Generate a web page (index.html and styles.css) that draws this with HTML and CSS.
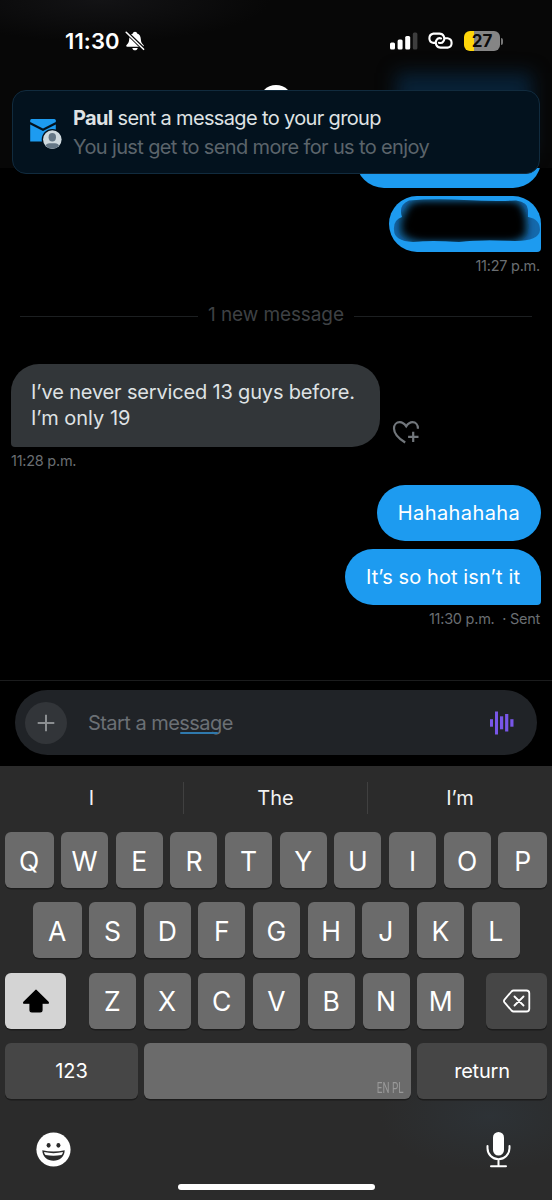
FILE: index.html
```html
<!DOCTYPE html>
<html lang="en">
<head>
<meta charset="utf-8">
<title>Messages</title>
<link rel="stylesheet" href="styles.css">
</head>
<body>
<div class="phone">
  <header class="header">
    <div class="glow"></div>
    <div class="status">
      <div class="clock">
        <span class="time">11:30</span>
        <svg class="bell" width="20" height="20" viewBox="0 0 20 20">
          <path d="M10 .8c-1.300 0-1.900.8-2.100 1.600C5.400 3.200 4.300 5.300 4.200 8c-.1 3-.9 4.300-2.600 5.900-.7.700-.4 1.800.7 1.800h15.400c1.100 0 1.400-1.100.7-1.800-1.700-1.600-2.500-2.900-2.600-5.900-.1-2.700-1.200-4.800-3.700-5.600C11.900 1.600 11.300.8 10 .8z" fill="#fff"/>
          <path d="M7.300 16.900h5.400c-.3 1.500-1.300 2.300-2.700 2.300s-2.400-.8-2.700-2.300z" fill="#fff"/>
          <path d="M1.200 1l17.600 17.200" stroke="#080808" stroke-width="3.600"/>
          <path d="M1.200 1.300l17.400 17" stroke="#fff" stroke-width="1.600" stroke-linecap="round"/>
        </svg>
      </div>
      <div class="indicators">
        <svg width="29" height="18" viewBox="0 0 29 18">
          <rect x="1" y="10.500" width="5" height="7" rx="1.500" fill="#fff"/>
          <rect x="8.600" y="7.500" width="5" height="10" rx="1.500" fill="#fff"/>
          <rect x="16.200" y="4" width="5" height="13.500" rx="1.500" fill="#fff"/>
          <rect x="23.800" y=".4" width="4.600" height="17.100" rx="1.500" fill="#3d3d3d"/>
        </svg>
        <svg class="link" width="27" height="18" viewBox="0 0 27 18" fill="none" stroke="#fff" stroke-width="2.100" stroke-linecap="round">
          <path d="M7.600 10.900H6.400A4.700 4.700 0 0 1 6.400 1.600H12.200A4.900 4.900 0 0 1 16.200 9.600C15.100 11.200 13.400 11.200 11.900 10.800"/>
          <path d="M18.400 6.300H20.600A4.700 4.700 0 0 1 20.600 15.600H13.800A4.900 4.900 0 0 1 9.800 7.700C10.900 6.100 12.600 5.900 14.100 6.400"/>
        </svg>
        <div class="battery"><span class="level">27</span></div>
        <span class="nub"></span>
      </div>
    </div>
    <div class="avatar"></div>
    <div class="toast">
      <svg class="mail" width="34" height="32" viewBox="0 0 34 32">
        <path d="M1.500 1h22.800q1.500 0 1.500 1.500V4L13 10.400.2 4V2.500Q.2 1 1.500 1z" fill="#1d9bf0"/>
        <path d="M.2 6.500L13 12.900l12.800-6.400V23.600H.2z" fill="#1d9bf0"/>
        <circle cx="22.300" cy="21.600" r="10.600" fill="#03121e"/>
        <circle cx="22.300" cy="21.600" r="9.300" fill="#cfd9de"/>
        <ellipse cx="22.300" cy="19.300" rx="3.700" ry="4.200" fill="#657786"/>
        <path d="M15.600 28q.6-2.800 4-2.800h5.400q3.400 0 4 2.800a9.300 9.300 0 0 1-13.400 0z" fill="#657786"/>
      </svg>
      <div class="toast-text">
        <div class="toast-title"><b>Paul</b> sent a message to your group</div>
        <div class="toast-body">You just get to send more for us to enjoy</div>
      </div>
    </div>
  </header>

  <main class="chat">
    <div class="bubble mine clipped"></div>
    <div class="bubble mine tail redacted">
      <svg width="152" height="56" viewBox="0 0 152 56">
        <defs>
          <filter id="soft" x="-20%" y="-40%" width="140%" height="180%"><feGaussianBlur stdDeviation="4.500"/></filter>
          <filter id="edge"><feGaussianBlur stdDeviation=".6"/></filter>
          <clipPath id="marker"><path d="M20 4.500Q45 2.500 75 4T127 4.500Q139 6 139 14L139 21Q151 23 151 34Q150 45 126 45Q92 43 70 46Q42 44 24 46Q5 45 5 34Q4 24 13 21Q9 9 20 4.500z"/></clipPath>
        </defs>
        <g filter="url(#edge)"><g clip-path="url(#marker)">
          <rect width="152" height="56" fill="#02101b" fill-opacity=".32"/>
          <path d="M22 7h108l7 16v17l-10 4H22L12 38V24z" fill="#000" filter="url(#soft)"/>
          <rect x="24" y="8" width="106" height="34" rx="9" fill="#000" filter="url(#soft)"/>
        </g></g>
      </svg>
    </div>
    <div class="stamp right">11:27 p.m.</div>
    <div class="divider"><i></i><span>1 new message</span><i></i></div>
    <div class="incoming">
      <div class="bubble theirs"><span class="line1">I’ve never serviced 13 guys before.</span><br><span class="line2">I’m only 19</span></div>
      <svg class="heart" width="28" height="26" viewBox="0 0 28 26" fill="none" stroke="#71767b" stroke-width="2.200">
        <path d="M13.200 22.500C6.500 18.300 2 13.500 2 8.400C2 4.700 4.500 2.200 7.700 2.200C10.500 2.200 12.500 3.900 14.200 6.300C15.800 3.900 17.800 2.200 20.500 2.200C23.700 2.200 25.900 4.600 25.900 8.300V8.700"/>
        <path d="M21.200 11.800v10.200M16.100 16.900h10.400"/>
      </svg>
    </div>
    <div class="stamp left">11:28 p.m.</div>
    <div class="bubble mine haha"><span>Hahahahaha</span></div>
    <div class="bubble mine tail hot"><span>It’s so hot isn’t it</span></div>
    <div class="stamp right">11:30 p.m. &nbsp;· Sent</div>
  </main>

  <section class="composer">
    <div class="field">
      <span class="plus"><svg width="18" height="18" viewBox="0 0 18 18" stroke="#8b8e91" stroke-width="2"><path d="M9 .7v16.600M.7 9h16.600"/></svg></span>
      <span class="placeholder">Start a message<i class="smear"></i></span>
      <svg class="voice" width="24" height="24" viewBox="0 0 24 24" fill="#7856e8">
        <rect x="0" y="8.200" width="3" height="7.500"/><rect x="5" y=".5" width="3" height="23"/><rect x="10" y="5.300" width="3.200" height="13"/><rect x="15.100" y="3" width="3.200" height="17.500"/><rect x="20.300" y="8.200" width="3.200" height="7.500"/>
      </svg>
    </div>
  </section>

  <section class="keyboard">
    <div class="suggestions"><span>I</span><span>The</span><span>I’m</span></div>
    <div class="keys">
      <div class="row"><b class="key edge">Q</b><b class="key">W</b><b class="key">E</b><b class="key">R</b><b class="key">T</b><b class="key">Y</b><b class="key">U</b><b class="key">I</b><b class="key">O</b><b class="key edge">P</b></div>
      <div class="row middle"><b class="key edge">A</b><b class="key">S</b><b class="key">D</b><b class="key">F</b><b class="key">G</b><b class="key">H</b><b class="key">J</b><b class="key">K</b><b class="key edge">L</b></div>
      <div class="row">
        <b class="key shift"><svg width="28" height="24" viewBox="0 0 28 24"><path d="M14 1.200L26.200 13.300q.6.900-.4.900H20V21q0 1.900-1.900 1.900h-8.200Q8 22.900 8 21v-6.800H2.200q-1 0-.4-.9z" stroke="#000" stroke-width="1.200" stroke-linejoin="round"/></svg></b>
        <div class="letters"><b class="key">Z</b><b class="key">X</b><b class="key">C</b><b class="key">V</b><b class="key">B</b><b class="key">N</b><b class="key">M</b></div>
        <b class="key dark delete"><svg width="28" height="24" viewBox="0 0 28 24" fill="none" stroke="#fff" stroke-width="1.800" stroke-linejoin="round" stroke-linecap="round"><path d="M10.500 1.500H23.500Q26.300 1.500 26.300 4.300V19.700Q26.300 22.500 23.500 22.500H10.500Q9.500 22.500 8.500 21.500L1.500 13.400Q.4 12 1.500 10.600L8.500 2.500Q9.500 1.500 10.500 1.500zM11.500 7.500l9 9M20.500 7.500l-9 9"/></svg></b>
      </div>
      <div class="row bottom"><b class="key dark numbers">123</b><b class="key space"><small>EN PL</small></b><b class="key dark return">return</b></div>
    </div>
    <div class="tools">
      <svg width="35" height="35" viewBox="0 0 35 35"><circle cx="17.500" cy="17.500" r="17.100" fill="#fff"/><ellipse cx="12.600" cy="13.300" rx="2" ry="2.400" fill="#2b2b2b"/><ellipse cx="22.400" cy="13.300" rx="2" ry="2.400" fill="#2b2b2b"/><path d="M6.300 18.200Q17.500 20.800 28.700 18.200C28.500 25 23.600 28.700 17.500 28.700S6.500 25 6.300 18.200z" fill="#2b2b2b"/><path d="M8 20.100Q17.500 22.200 27 20.100Q26.700 22 25.500 23Q17.500 24.400 9.500 23Q8.300 22 8 20.100z" fill="#fff"/></svg>
      <svg width="25" height="37" viewBox="0 0 25 37" fill="none" stroke="#fff" stroke-width="2" stroke-linecap="round"><rect x="7" y="1" width="11" height="23.500" rx="5.500" fill="#fff" stroke="none"/><path d="M1.500 15v2.200a11 11 0 0 0 22 0V15M12.500 28.500v6M5 35.300h15"/></svg>
    </div>
    <div class="home"></div>
  </section>
</div>
</body>
</html>
```
FILE: styles.css
```css
* { box-sizing: border-box; }
body { margin: 0; background: #000; }
.phone {
  width: 552px; height: 1200px; overflow: hidden;
  display: flex; flex-direction: column;
  background: #000; color: #dfe2e4;
  font-family: Inter, "Liberation Sans", sans-serif;
}

/* Header and notification */
.header {
  position: relative; z-index: 1; height: 168px; flex: none;
  background: radial-gradient(ellipse 170px 42px at 100px 0, #131315, transparent), #070707;
}
.glow {
  position: absolute; left: 396px; top: 73px; width: 136px; height: 80px;
  background: #082136; filter: blur(9px);
}
.status {
  position: relative; display: flex; justify-content: space-between;
  padding: 31px 49px 0 65px;
}
.clock { display: flex; align-items: center; height: 20px; gap: 3px; }
.time { width: 57px; font-size: 22px; font-weight: 600; letter-spacing: .1px; color: #fff; white-space: nowrap; }
.bell { flex: none; }
.indicators { display: flex; align-items: center; height: 20px; }
.link { margin-left: 9px; }
.battery {
  margin-left: 10px; width: 36px; height: 20px; border-radius: 6px;
  background: linear-gradient(90deg, #ffd60a 10px, #858585 10px);
  display: flex; justify-content: center; align-items: center;
}
.level { font-size: 17px; line-height: 20px; font-weight: 700; color: #0b0b0b; }
.nub { width: 2px; height: 7px; margin-left: 1px; border-radius: 0 3px 3px 0; background: #777; }
.avatar {
  position: absolute; left: 259px; top: 85px; width: 34px; height: 34px;
  border-radius: 50%; background: #fff;
}
.toast {
  position: absolute; left: 12px; top: 90px; width: 528px; height: 84px;
  border: 1px solid #112b3e; border-radius: 14px; background: #03121e;
  display: flex; align-items: center; padding-left: 17px; gap: 9px;
}
.mail { flex: none; margin-top: 3px; }
.toast-text { white-space: nowrap; line-height: 29px; padding-top: 1px; }
.toast-title { font-size: 20px; letter-spacing: -.65px; }
.toast-title b { font-weight: 700; }
.toast-body { font-size: 20px; letter-spacing: -.63px; color: #5b646b; }

/* Conversation */
.chat { height: 512px; flex: none; display: flex; flex-direction: column; padding: 0 11px; overflow: hidden; }
.bubble { flex: none; font-size: 20px; line-height: 26px; white-space: nowrap; }
.mine {
  align-self: flex-end; height: 56px; border-radius: 28px; background: #1d9bf0; color: #fff;
  display: flex; align-items: center; justify-content: center;
}
.tail { border-bottom-right-radius: 4px; }
.clipped { width: 185px; margin-top: -36px; }
.redacted { width: 152px; margin-top: 8px; }
.stamp { flex: none; height: 18px; line-height: 18px; font-size: 14.500px; letter-spacing: -.25px; color: #6a6e72; white-space: nowrap; }
.right { align-self: flex-end; margin-top: 5px; padding-right: 1px; }
.left { margin-top: 5px; }
.divider { flex: none; display: flex; align-items: center; gap: 10px; height: 26px; margin: 27px 9px 0; font-size: 19px; color: #3e4144; white-space: nowrap; }
.divider span { letter-spacing: -.1px; margin-top: -1px; }
.divider i { flex: 1; height: 1px; margin-top: 3px; background: #1c1f21; }
.incoming { display: flex; align-items: flex-end; margin-top: 36px; gap: 12px; height: 83px; flex: none; }
.theirs { width: 369px; height: 83px; padding: 15px 20px 0; border-radius: 28px 28px 28px 4px; background: #323639; }
.line1 { letter-spacing: -.17px; }
.line2 { letter-spacing: 0; }
.heart { margin-bottom: 1px; }
.haha { width: 164px; margin-top: 15px; letter-spacing: .4px; }
.hot { width: 196px; margin-top: 8px; letter-spacing: .1px; }

/* Message field */
.composer { flex: none; height: 86px; border-top: 1px solid #1b1c1d; padding: 9px 15px 0; }
.field { display: flex; align-items: center; height: 65px; border-radius: 33px; background: #202327; padding: 0 23px 0 10px; }
.plus { display: flex; align-items: center; justify-content: center; width: 42px; height: 42px; border-radius: 50%; background: #323539; }
.placeholder { position: relative; margin-left: 21px; font-size: 20px; color: #6b7075; white-space: nowrap; letter-spacing: -.55px; }
.smear { position: absolute; left: 92px; bottom: 1px; width: 38px; height: 2px; border-radius: 1px; background: #2f79ad; }
.voice { margin-left: auto; }

/* Keyboard */
.keyboard {
  flex: none; height: 434px; display: flex; flex-direction: column; align-items: center;
  background: radial-gradient(ellipse 110px 55px at 490px 350px, #2d3236, transparent), #2b2b2b;
}
.suggestions { width: 100%; height: 66px; padding-bottom: 2px; display: grid; grid-template-columns: 183px 184px 185px; align-items: center; color: #f2f2f2; font-size: 20px; }
.suggestions span { height: 32px; line-height: 32px; text-align: center; }
.suggestions span + span { border-left: 1px solid #404040; }
.keys { width: 542px; display: flex; flex-direction: column; gap: 14px; }
.row { display: flex; justify-content: space-between; height: 56.300px; }
.middle { padding: 0 27px 0 28px; }
.key {
  width: 47px; height: 56px; border-radius: 6px; background: #6b6b6b; color: #fff;
  box-shadow: 0 1.500px 0 #1c1c1c; display: flex; align-items: center; justify-content: center;
  font-size: 26.500px; font-weight: 400; padding-top: 1px;
}
.edge { width: 48.500px; }
.letters { display: flex; justify-content: space-between; width: 375.500px; margin-left: 1px; }
.shift { width: 61px; background: #d4d4d4; }
.dark { background: #464646; }
.delete { width: 61px; }
.numbers { width: 133px; font-size: 20px; }
.space { width: 267px; align-items: flex-end; justify-content: flex-end; padding: 0 7px 3px 0; margin-left: -1px; }
.space small { font: 15px/16px Roboto, sans-serif; color: #999; transform: scaleX(.66); transform-origin: right; }
.return { width: 130px; font-size: 20px; letter-spacing: -.2px; }
.tools { width: 100%; display: flex; justify-content: space-between; align-items: center; height: 37px; margin-top: 32px; padding: 0 41px 0 36px; }
.home { width: 197px; height: 6px; margin-top: 16px; border-radius: 3px; background: #fff; }
```
